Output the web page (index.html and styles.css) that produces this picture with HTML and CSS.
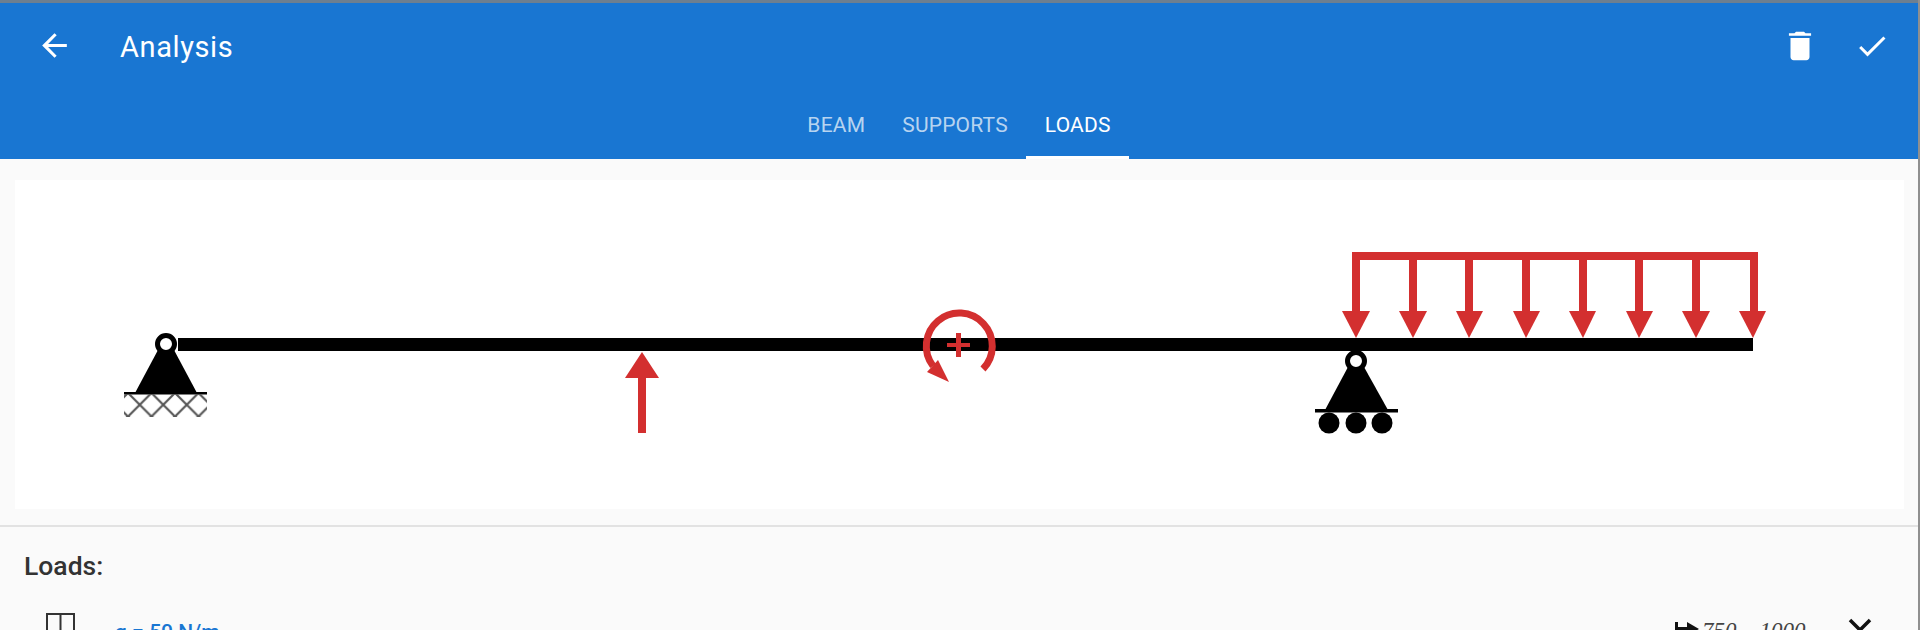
FILE: index.html
```html
<!DOCTYPE html>
<html lang="en">
<head>
<meta charset="utf-8">
<title>Analysis</title>
<link rel="stylesheet" href="styles.css">
</head>
<body>
<div class="app">
  <header class="appbar">
    <div class="toolbar">
      <svg class="icon back" viewBox="0 0 24 24"><path d="M20 11H7.830l5.590-5.590L12 4l-8 8 8 8 1.410-1.410L7.830 13H20z"/></svg>
      <h1 class="title">Analysis</h1>
      <svg class="icon trash" viewBox="0 0 24 24"><path d="M6 19c0 1.100.9 2 2 2h8c1.100 0 2-.9 2-2V7H6zM19 4h-3.500l-1-1h-5l-1 1H5v1.500h14z"/></svg>
      <svg class="icon check" viewBox="0 0 24 24"><path d="M9 16.170 4.830 12l-1.420 1.410L9 19 21 7l-1.410-1.410z"/></svg>
    </div>
    <nav class="tabs">
      <span class="tab">BEAM</span>
      <span class="tab">SUPPORTS</span>
      <span class="tab active">LOADS</span>
    </nav>
  </header>
  <section class="card">
    <svg class="diagram" viewBox="15 180 1889 329" xmlns="http://www.w3.org/2000/svg">
      <defs>
        <pattern id="hatch" x="128" y="393" width="23.5" height="23.500" patternUnits="userSpaceOnUse">
          <path d="M0 0 23.500 23.500M23.500 0 0 23.500" stroke="#555" stroke-width="2.200" fill="none"/>
        </pattern>
      </defs>
      <rect x="178" y="338" width="1575" height="13" fill="#000"/>
      <path d="M158 350H174L197 393H135z" fill="#000"/>
      <circle cx="166" cy="344" r="8.500" fill="#fff" stroke="#000" stroke-width="5"/>
      <rect x="124" y="392" width="83" height="2.500" fill="#000"/>
      <rect x="124" y="394" width="83" height="23" fill="url(#hatch)"/>
      <path d="M1348 367H1364L1388 410H1325z" fill="#000"/>
      <circle cx="1356" cy="361" r="8.500" fill="#fff" stroke="#000" stroke-width="5"/>
      <rect x="1315" y="409" width="83" height="3.500" fill="#000"/>
      <circle cx="1329" cy="423" r="10.500"/><circle cx="1356" cy="423" r="10.500"/><circle cx="1382" cy="423" r="10.500"/>
      <g fill="#d32f2f">
        <rect x="638" y="376" width="8" height="57"/>
        <path d="M642 352 659 378H625z"/>
        <path d="M938 360 949 382 927 372z"/>
        <rect x="947" y="343" width="23" height="4"/>
        <rect x="956" y="333" width="5" height="24"/>
        <rect x="1352" y="252" width="406" height="8"/>
        <g>
          <rect x="1352" y="252" width="8" height="62"/><path d="M1342 311H1370L1356 338z"/>
          <rect x="1409" y="252" width="8" height="62"/><path d="M1399 311H1427L1413 338z"/>
          <rect x="1465" y="252" width="8" height="62"/><path d="M1456 311H1483L1469 338z"/>
          <rect x="1522" y="252" width="8" height="62"/><path d="M1513 311H1540L1526 338z"/>
          <rect x="1579" y="252" width="8" height="62"/><path d="M1569 311H1596L1583 338z"/>
          <rect x="1635" y="252" width="8" height="62"/><path d="M1626 311H1653L1639 338z"/>
          <rect x="1692" y="252" width="8" height="62"/><path d="M1682 311H1710L1696 338z"/>
          <rect x="1750" y="252" width="8" height="62"/><path d="M1739 311H1766L1753 338z"/>
        </g>
      </g>
      <path d="M983 369A33 33 0 1 0 933 366" fill="none" stroke="#d32f2f" stroke-width="7"/>
    </svg>
  </section>
  <hr class="divider">
  <section class="loads">
    <h2 class="loads-title">Loads:</h2>
    <div class="load-row">
      <svg class="load-icon" viewBox="0 0 29 30"><path d="M1 30V1H28V30M14.500 1V30" fill="none" stroke="#333" stroke-width="2"/></svg>
      <span class="load-name">q = 50 N/m</span>
      <svg class="pos-icon" viewBox="0 0 24 16"><path d="M1.500 0V16M1.500 6.500H14" stroke="#111" stroke-width="3" fill="none"/><path d="M12 0 24 7 12 14z" fill="#111"/></svg>
      <span class="load-pos">750 .. 1000</span>
      <svg class="close-icon" viewBox="0 0 24 24"><path d="M2 2 22 22M22 2 2 22" stroke="#111" stroke-width="3.500" fill="none"/></svg>
    </div>
  </section>
</div>
</body>
</html>
```
FILE: styles.css
```css
html, body { margin: 0; padding: 0; height: 630px; overflow: hidden; background: #fafafa; }
body { font-family: Roboto, "Liberation Sans", sans-serif; }
.app { width: 1918px; height: 630px; overflow: hidden; border-right: 2px solid #8f8f8f; background: #fafafa; }
.appbar { height: 156px; background: #1976d2; border-top: 3px solid #6d7f90; display: flex; flex-direction: column; }
.toolbar { height: 85px; display: flex; align-items: center; padding: 0 28px 0 36px; color: #fff; box-sizing: border-box; }
.icon { fill: #fff; }
.back { width: 37px; height: 37px; }
.title { margin: 2px 0 0 47px; font-size: 29px; font-weight: 400; flex: 1; letter-spacing: .6px; color: #fff; }
.trash { width: 38px; height: 38px; margin-right: 35px; }
.check { width: 36px; height: 36px; }
.tabs { flex: 1; display: flex; justify-content: center; align-items: stretch; padding-top: 3px; }
.tab { padding: 0 18.5px; font-size: 21px; letter-spacing: .2px; color: rgba(255,255,255,.7); display: flex; align-items: center; box-sizing: border-box; }
.tab.active { color: #fff; border-bottom: 3px solid #fff; padding-top: 3px; }
.card { margin: 21px 14px 0 15px; height: 329px; background: #fff; }
.diagram { display: block; width: 1889px; height: 329px; }
.divider { margin: 16px 0 0; border: 0; border-top: 2px solid #e2e2e2; }
.loads { padding: 0 0 0 24px; }
.loads-title { margin: 25px 0 0; font-size: 26.500px; font-weight: 500; color: #333; line-height: 28px; }
.load-row { display: flex; align-items: flex-start; margin-top: 33px; }
.load-icon { width: 29px; height: 30px; margin: 0 0 0 22px; flex: none; }
.load-name { margin: 7px auto 0 40px; font-size: 21px; font-weight: 500; color: #1976d2; }
.pos-icon { width: 24px; height: 16px; margin-top: 9px; flex: none; }
.load-pos { margin: 5px 0 0 3px; font: italic 23px "Liberation Serif", serif; color: #444; width: 146px; }
.close-icon { width: 24px; height: 24px; margin: 5px 46px 0 0; flex: none; }
```
